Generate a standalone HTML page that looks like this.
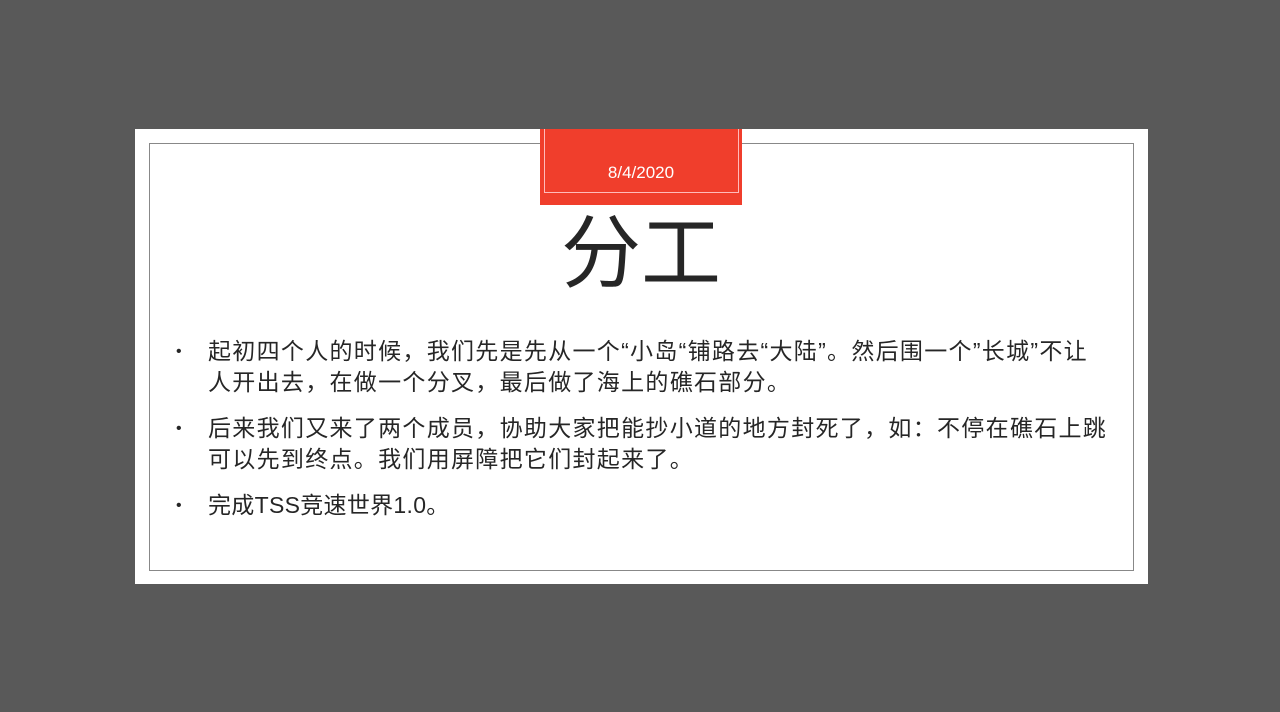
<!DOCTYPE html>
<html><head><meta charset="utf-8"><style>
body{margin:0;width:1280px;height:712px;background:#595959;position:relative;overflow:hidden;font-family:"Liberation Sans","Noto Sans CJK SC",sans-serif}
.slide{position:absolute;left:135px;top:129px;width:1013px;height:455px;background:#fff}
.frame{position:absolute;left:149px;top:143px;width:983px;height:426px;border:1px solid #888}
.red{position:absolute;left:540px;top:129px;width:202px;height:76px;background:#f03e2c}
.inner{position:absolute;left:544px;top:129px;width:193px;height:63px;border:1px solid #fbb;border-top:none}
.date{position:absolute;left:540px;top:163px;width:202px;text-align:center;color:#fff;font-size:17px}
.title{position:absolute;left:440px;top:204px;width:402px;text-align:center;font-size:80px;color:#262626;line-height:100px}
ul{position:absolute;left:176px;top:336px;width:960px;margin:0;padding:0;list-style:none;font-size:23px;color:#262626;line-height:31px;white-space:nowrap;letter-spacing:1.3px}
li{position:relative;padding-left:32px;margin-bottom:15px}
li:before{content:"•";position:absolute;left:0;font-size:16px}
</style></head><body>
<div class="slide"></div><div class="frame"></div>
<div class="red"></div><div class="inner"></div>
<div class="date">8/4/2020</div>
<div class="title">分工</div>
<ul>
<li>起初四个人的时候，我们先是先从一个“小岛“铺路去“大陆”。然后围一个”长城”不让<br>人开出去，在做一个分叉，最后做了海上的礁石部分。</li>
<li>后来我们又来了两个成员，协助大家把能抄小道的地方封死了，如：不停在礁石上跳<br>可以先到终点。我们用屏障把它们封起来了。</li>
<li style="letter-spacing:0.3px">完成TSS竞速世界1.0。</li>
</ul>
</body></html>
